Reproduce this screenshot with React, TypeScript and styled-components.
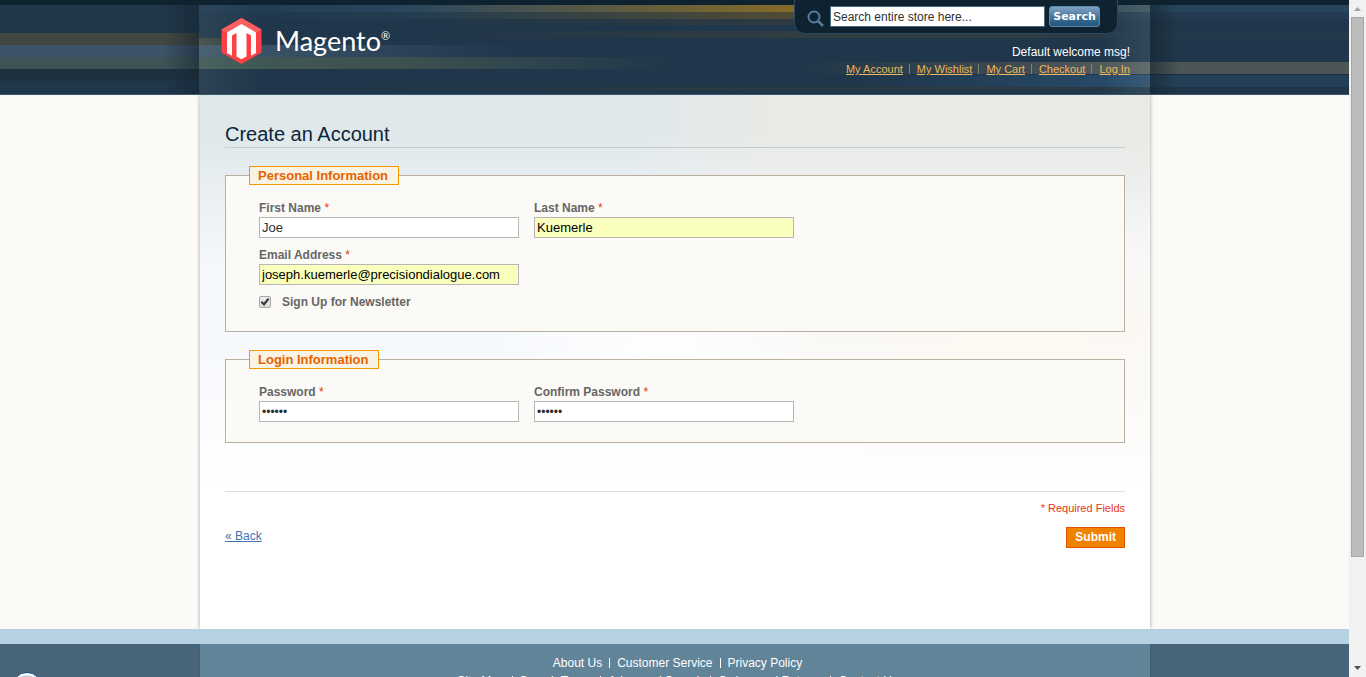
import React from "react";
import styled, { createGlobalStyle } from "styled-components";

const GlobalStyle = createGlobalStyle`
  *, *::before, *::after { box-sizing: border-box; }
  body {
    margin: 0;
    background: #fbfaf6;
    color: #2f2f2f;
    font: 12px/16px "Liberation Sans", Arial, sans-serif;
  }
  input, button { font-family: inherit; margin: 0; }
`;

const Viewport = styled.div`
  display: flex;
  height: 100vh;
  overflow: hidden;
`;

const Page = styled.div`
  flex: 1;
  min-width: 0;
`;

const stripe = (colors: string, top: number, height: number) =>
  `linear-gradient(90deg, ${colors}) 0 ${top}px / 100% ${height}px no-repeat`;

const Header = styled.header`
  position: relative;
  z-index: 1;
  display: grid;
  grid-template-columns: 1fr 950px 1fr;
  height: 95px;
  border-top: 5px solid #0e2230;
  border-bottom: 1px solid #38566f;
  background: #20364a;
`;

const HeaderSide = styled.div<{ $right?: boolean }>`
  background: ${({ $right }) =>
    $right
      ? [
          "linear-gradient(90deg, rgba(20, 36, 48, 0.6), rgba(20, 36, 48, 0) 30px)",
          stripe("#27465d, #27465d", 0, 7),
          stripe("#243c52, #243c52", 7, 7),
          stripe("#20364a, #20364a", 14, 12),
          stripe("#22394c, #22394c", 26, 7),
          stripe("#4c5656, #4c5656", 57, 12),
          stripe("#182c3c, #182c3c", 69, 1),
          stripe("#244058, #244058", 70, 12),
          stripe("#203648, #203648", 82, 7),
        ].join(", ")
      : [
          "linear-gradient(270deg, rgba(20, 36, 48, 0.6), rgba(20, 36, 48, 0) 36px)",
          "linear-gradient(#20364a, #203648) 0 0 / 100% 28px no-repeat",
          stripe("#424640, #424640", 28, 12),
          stripe("#3d5266, #3d5266", 40, 12),
          stripe("#3d5356, #3d5356", 52, 12),
          stripe("#1f3140, #1f3140", 64, 12),
        ].join(", ")};
`;

const HeaderInner = styled.div`
  position: relative;
  display: flex;
  justify-content: space-between;
  margin-left: -1px;
  padding: 12px 20px 0 22px;
  background: ${[
    "linear-gradient(90deg, rgba(120, 150, 160, 0.14), rgba(120, 150, 160, 0) 60px)",
    "linear-gradient(270deg, rgba(120, 150, 160, 0.2), rgba(120, 150, 160, 0) 50px)",
    stripe("#20384f, #28465f 200px, #4c544c 340px, #866b27 600px, #866b27 700px, #2b4a60 850px, #3c5258", 0, 7),
    stripe("#20364c, #223c50 200px, #514b34 600px, #514b34 700px, #243c50 900px", 7, 7),
    stripe("#20364a, #20364a 220px, #2e3a40 600px, #20364a", 14, 6),
    stripe("#20364a, #20364a 220px, #323d40 640px, #303c42 850px, #20364a", 26, 7),
    stripe("#4a4a40, #20364a 60px", 28, 12),
    stripe("#435a6c, #324a5f 130px, #20364a 320px", 40, 12),
    stripe("#435a54, #3d5150 200px, rgba(32, 54, 74, 0) 480px", 52, 12),
    stripe("#20364a, #20364a 600px, #3c4850 800px, #5c6260", 57, 12),
    stripe("#20364a, #20364a 650px, #284c6c", 70, 12),
    stripe("#20364a, #20364a 100px, #2c3a40 500px, #2c3a40 850px, #20364a", 82, 3),
  ].join(", ")};
`;

const Brand = styled.a`
  display: flex;
  align-items: flex-start;
  gap: 13px;
  height: 48px;
  color: #fff;
  text-decoration: none;
`;

const BrandName = styled.span`
  font: 27px/48px Lato, "Noto Sans", sans-serif;
  sup {
    font-size: 11px;
    line-height: 11px;
    vertical-align: 11px;
  }
`;

const SearchForm = styled.form`
  position: absolute;
  top: -5px;
  right: 32px;
  display: flex;
  align-items: flex-start;
  width: 324px;
  height: 34px;
  padding: 6px 17px 0 12px;
  border: 1px solid #2b4862;
  border-top: 0;
  border-radius: 0 0 10px 10px;
  background: #0e2230;
`;

const SearchIcon = styled.svg`
  flex: none;
  margin: 4px 6px 0 0;
`;

const SearchInput = styled.input`
  flex: 1;
  min-width: 0;
  height: 21px;
  padding: 0 2px;
  border: 1px solid #4a6b82;
  background: #fff;
  color: #2f2f2f;
  font-size: 12px;
`;

const SearchButton = styled.button`
  width: 51px;
  height: 21px;
  margin-left: 4px;
  padding: 0;
  border: 1px solid #5c88a8;
  border-radius: 3px;
  background: linear-gradient(#7ea2c2, #2c5f88 80%, #27587f);
  color: #fff;
  font: bold 11px/19px "DejaVu Sans", Verdana, sans-serif;
`;

const Account = styled.div`
  display: flex;
  flex-direction: column;
  align-items: flex-end;
  gap: 1px;
  padding-top: 27px;
`;

const Welcome = styled.p`
  margin: 0;
  color: #fff;
  font-size: 12px;
`;

const QuickLinks = styled.ul`
  display: flex;
  margin: 0;
  padding: 0;
  list-style: none;
  font-size: 11px;
  li + li {
    display: flex;
    align-items: center;
  }
  li + li::before {
    content: "";
    width: 1px;
    height: 10px;
    margin: 0 7px 0 6px;
    background: #718a80;
  }
  a { color: #ebb85c; }
`;

const Main = styled.main`
  width: 950px;
  margin: 0 auto;
  padding: 26px 25px 81px;
  background:
    radial-gradient(170px 130px at 460px 250px, rgba(255, 255, 255, 0.9), rgba(255, 255, 255, 0)),
    radial-gradient(420px 150px at 820px 240px, rgba(255, 249, 240, 0.8), rgba(255, 249, 240, 0)),
    linear-gradient(rgba(255, 255, 255, 0) 40px, rgba(246, 248, 252, 0.95) 165px, rgba(248, 250, 253, 0.95) 260px, #fff 390px),
    linear-gradient(90deg, #e0e8ea, #e0e8ec 45%, #e8eae6 60%);
  box-shadow: 0 0 4px rgba(0, 0, 0, 0.35);
`;

const PageTitle = styled.h1`
  margin: 0 0 18px;
  border-bottom: 1px solid #c9cdce;
  color: #0a263c;
  font-size: 20px;
  font-weight: normal;
  line-height: 26px;
`;

const FieldGroup = styled.fieldset`
  margin: 0 0 18px;
  padding: 16px 23px 20px;
  border: 1px solid #bbafa0;
  background: #fbfaf6;
`;

const Legend = styled.legend`
  padding: 0 10px 0 8px;
  border: 1px solid #f19900;
  background: #f9f3e3;
  color: #e76200;
  font-size: 13px;
  font-weight: bold;
  line-height: 17px;
`;

const Fields = styled.div`
  display: grid;
  grid-template-columns: 260px 260px;
  gap: 10px 15px;
  padding: 0 10px;
`;

const Label = styled.label`
  display: block;
  margin-bottom: 2px;
  color: #666;
  font-weight: bold;
  line-height: 14px;
  em {
    color: #eb340a;
    font-style: normal;
    font-weight: normal;
  }
`;

const TextInput = styled.input<{ $autofilled?: boolean; $secret?: boolean }>`
  display: block;
  width: 100%;
  height: 21px;
  padding: 0 2px;
  border: 1px solid #b6b6b6;
  background: ${({ $autofilled }) => ($autofilled ? "#faffbd" : "#fff")};
  color: ${({ $autofilled }) => ($autofilled ? "#000" : "#2f2f2f")};
  font-size: ${({ $secret }) => ($secret ? 12 : 13)}px;
`;

const CheckRow = styled.div`
  grid-column: 1;
  display: flex;
  align-items: flex-start;
  gap: 11px;
`;

const CheckBox = styled.input`
  appearance: none;
  display: grid;
  place-items: center;
  width: 12px;
  height: 12px;
  && { margin-top: 1px; }
  border: 1px solid #a8a8a8;
  border-radius: 2px;
  background: linear-gradient(#eee, #ddd);
  &:checked::after {
    content: "";
    width: 9px;
    height: 8px;
    background: #3c3c3c;
    clip-path: polygon(0 55%, 18% 38%, 36% 60%, 80% 0, 100% 15%, 40% 100%);
  }
`;

const Actions = styled.div`
  display: grid;
  grid-template-columns: 1fr auto;
  align-items: center;
  gap: 11px 0;
  margin-top: 48px;
  padding-top: 8px;
  border-top: 1px solid #dfdfdf;
`;

const Required = styled.p`
  grid-column: 1 / -1;
  margin: 0;
  color: #eb340a;
  font-size: 11px;
  text-align: right;
`;

const BackLink = styled.a`
  padding-bottom: 4px;
  color: #3c72b0;
`;

const SubmitButton = styled.button`
  height: 21px;
  padding: 0 8px;
  border: 1px solid #de5400;
  background: #f18200;
  color: #fff;
  font-size: 12px;
  font-weight: bold;
  line-height: 19px;
`;

const Footer = styled.footer`
  position: relative;
  border-top: 15px solid #b6d1e2;
  background: #486478;
`;

const FooterInner = styled.div`
  width: 950px;
  margin: 0 auto;
  padding: 11px 0 20px;
  background: #618499;
  box-shadow: -1px 0 #40606f, 1px 0 #40606f;
`;

const FooterLinks = styled.ul`
  display: flex;
  justify-content: center;
  margin: 0 0 2px;
  padding: 0 0 0 5px;
  list-style: none;
  a { color: #fff; text-decoration: none; }
  li + li { display: flex; align-items: center; }
  li + li::before {
    content: "";
    width: 1px;
    height: 10px;
    margin: 0 7px;
    background: #fff;
  }
`;

const Badge = styled.span`
  position: absolute;
  top: 28px;
  left: 12px;
  width: 30px;
  height: 30px;
  border: 1px solid #1a5484;
  border-radius: 50%;
  background: radial-gradient(circle, #9bb4c8 50%, #fff 64%);
`;

const ScrollTrack = styled.div`
  position: relative;
  z-index: 2;
  display: flex;
  flex: none;
  flex-direction: column;
  align-items: center;
  width: 17px;
  margin-left: -1px;
  background: #f1f1f1;
`;

const ScrollThumb = styled.div`
  flex: 0 0 calc(80% - 2px);
  width: 13px;
  border: 1px solid #a8a8a8;
  background: #bcbcbc;
`;

const Arrow = styled.svg<{ $down?: boolean }>`
  flex: none;
  margin-top: ${({ $down }) => ($down ? "auto" : "0")};
`;

type FieldProps = { id: string; label: string; value: string; type?: string; autofilled?: boolean };

function Field({ id, label, value, type = "text", autofilled }: FieldProps) {
  return (
    <div>
      <Label htmlFor={id}>
        {label} <em>*</em>
      </Label>
      <TextInput
        id={id}
        type={type}
        defaultValue={value}
        $autofilled={autofilled}
        $secret={type === "password"}
      />
    </div>
  );
}

const accountLinks = ["My Account", "My Wishlist", "My Cart", "Checkout", "Log In"];
const footerRows = [
  ["About Us", "Customer Service", "Privacy Policy"],
  ["Site Map", "Search Terms", "Advanced Search", "Orders and Returns", "Contact Us"],
];

export default function App() {
  return (
    <Viewport>
      <GlobalStyle />
      <Page>
        <Header>
          <HeaderSide />
          <HeaderInner>
            <Brand href="#">
              <svg width="41" height="48" viewBox="0 0 41 48" aria-hidden="true">
                <path fill="#fb4144" d="M20.500 1 40.500 12.500V35.500L20.500 47 .5 35.500V12.500Z" />
                <path fill="#f9605f" d="M20.500 1 40.500 12.500 35 16 20.500 7 6 16 .5 12.500Z" />
                <path fill="#fff" d="M20.500 7 35 15.500V36L30 38.800V18.500L25.500 16V39.500L20.500 42.300 15.500 39.500V16L11 18.500V38.800L6 36V15.500Z" />
              </svg>
              <BrandName>
                Magento<sup>®</sup>
              </BrandName>
            </Brand>
            <SearchForm onSubmit={(e) => e.preventDefault()}>
              <SearchIcon width="17" height="17" viewBox="0 0 17 17" fill="none" stroke="#567b9c" aria-hidden="true">
                <circle cx="7" cy="7" r="5.500" strokeWidth="2" />
                <path d="m11 11 5 5" strokeWidth="2.500" />
              </SearchIcon>
              <SearchInput aria-label="Search" defaultValue="Search entire store here..." />
              <SearchButton type="submit">Search</SearchButton>
            </SearchForm>
            <Account>
              <Welcome>Default welcome msg!</Welcome>
              <QuickLinks>
                {accountLinks.map((text) => (
                  <li key={text}>
                    <a href="#">{text}</a>
                  </li>
                ))}
              </QuickLinks>
            </Account>
          </HeaderInner>
          <HeaderSide $right />
        </Header>

        <Main>
          <PageTitle>Create an Account</PageTitle>
          <form onSubmit={(e) => e.preventDefault()}>
            <FieldGroup>
              <Legend>Personal Information</Legend>
              <Fields>
                <Field id="firstname" label="First Name" value="Joe" />
                <Field id="lastname" label="Last Name" value="Kuemerle" autofilled />
                <Field id="email" label="Email Address" value="joseph.kuemerle@precisiondialogue.com" autofilled />
                <CheckRow>
                  <CheckBox id="newsletter" type="checkbox" defaultChecked />
                  <Label htmlFor="newsletter">Sign Up for Newsletter</Label>
                </CheckRow>
              </Fields>
            </FieldGroup>
            <FieldGroup>
              <Legend>Login Information</Legend>
              <Fields>
                <Field id="password" label="Password" value="secret" type="password" />
                <Field id="confirm" label="Confirm Password" value="secret" type="password" />
              </Fields>
            </FieldGroup>
            <Actions>
              <Required>* Required Fields</Required>
              <BackLink href="#">« Back</BackLink>
              <SubmitButton type="submit">Submit</SubmitButton>
            </Actions>
          </form>
        </Main>

        <Footer>
          <FooterInner>
            {footerRows.map((row) => (
              <FooterLinks key={row[0]}>
                {row.map((text) => (
                  <li key={text}>
                    <a href="#">{text}</a>
                  </li>
                ))}
              </FooterLinks>
            ))}
          </FooterInner>
          <Badge />
        </Footer>
      </Page>
      <ScrollTrack>
        <Arrow width="17" height="17" viewBox="0 0 17 17" aria-hidden="true">
          <path fill="#a3a3a3" d="M5 11h7L8.500 7Z" />
        </Arrow>
        <ScrollThumb />
        <Arrow $down width="17" height="17" viewBox="0 0 17 17" aria-hidden="true">
          <path fill="#505050" d="M5 6h7L8.500 10Z" />
        </Arrow>
      </ScrollTrack>
    </Viewport>
  );
}
